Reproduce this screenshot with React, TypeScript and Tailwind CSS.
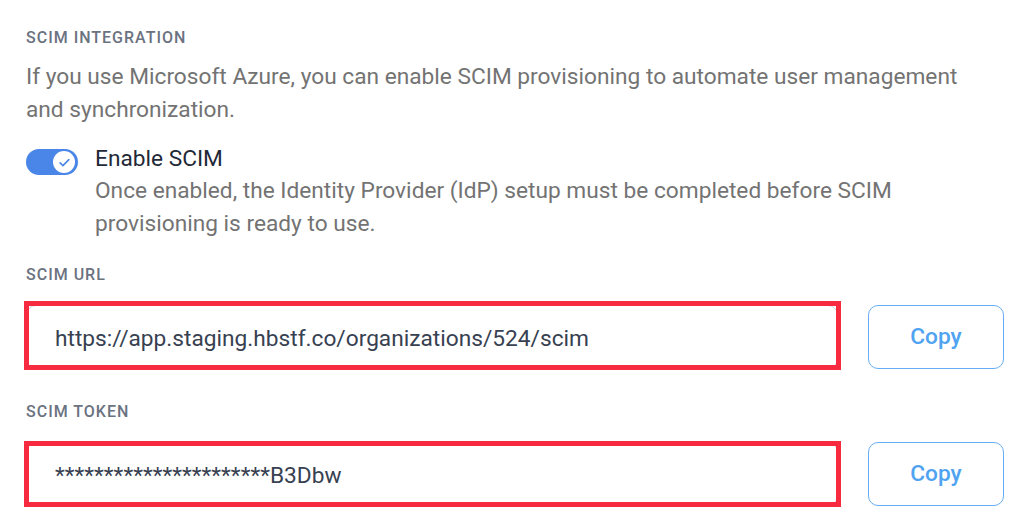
import React from "react";

const font = { fontFamily: "Roboto, 'Noto Sans', sans-serif" };

const Label: React.FC<{ children: React.ReactNode; className?: string }> = ({
  children,
  className = "",
}) => (
  <div
    className={`text-[16px] leading-[20px] font-medium uppercase tracking-[1px] text-[#6b7280] ${className}`}
  >
    {children}
  </div>
);

const CopyField: React.FC<{
  value: string;
  redClass: string;
  className?: string;
}> = ({ value, redClass, className = "" }) => (
  <div className={`flex items-center gap-[30px] ${className}`}>
    <div className="relative w-[812px] h-[64px]">
      <div className="w-full h-full rounded-[10px] border border-[#d1d5db] bg-white flex items-center pl-[28px] pt-[2px] text-[22.7px] leading-[33px] text-[#374151]">
        {value}
      </div>
      <div
        className={`absolute pointer-events-none border-[5px] border-[#f82a40] ${redClass}`}
      />
    </div>
    <button className="w-[136px] h-[64px] rounded-[10px] border-[1.5px] border-[#66aef5] bg-white text-[22.7px] font-medium text-[#4fa3f1]">
      Copy
    </button>
  </div>
);

export default function App() {
  return (
    <div
      className="w-[1024px] h-[526px] bg-white pl-[26px] pt-[28px] overflow-hidden"
      style={font}
    >
      <Label>SCIM Integration</Label>
      <p className="mt-[12px] text-[22.7px] leading-[33px] text-[#737373] w-[960px]">
        If you use Microsoft Azure, you can enable SCIM provisioning to automate
        user management and synchronization.
      </p>

      <div className="mt-[18px] flex items-start gap-[17px]">
        <div className="mt-[5px] w-[52px] h-[26px] rounded-full bg-[#4a86e8] flex items-center justify-end pr-[3px] shrink-0">
          <div className="w-[22px] h-[22px] rounded-full bg-white flex items-center justify-center">
            <svg width="15" height="15" viewBox="0 0 24 24" fill="none">
              <path
                d="M5 12.5l4.5 4.5L19 7.5"
                stroke="#4a86e8"
                strokeWidth="2.6"
                strokeLinecap="round"
                strokeLinejoin="round"
              />
            </svg>
          </div>
        </div>
        <div>
          <div className="text-[22.7px] leading-[30px] text-[#1f2937]">Enable SCIM</div>
          <div className="text-[22.7px] leading-[33px] text-[#737373] w-[860px]">
            Once enabled, the Identity Provider (IdP) setup must be completed
            before SCIM provisioning is ready to use.
          </div>
        </div>
      </div>

      <Label className="mt-[25px]">SCIM URL</Label>
      <CopyField
        className="mt-[20px]"
        value="https://app.staging.hbstf.co/organizations/524/scim"
        redClass="-top-[4px] -bottom-[1px] -left-[2px] -right-[3px]"
      />

      <Label className="mt-[33px]">SCIM Token</Label>
      <CopyField
        className="mt-[20px]"
        value="**********************B3Dbw"
        redClass="-top-[1px] -bottom-[1px] -left-[2px] -right-[3px]"
      />
    </div>
  );
}
